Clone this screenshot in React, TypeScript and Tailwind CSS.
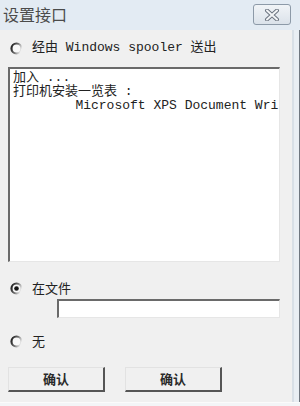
import React from "react";

const mono = { fontFamily: '"Liberation Mono", "Noto Sans CJK SC", monospace' };
const cjk = { fontFamily: '"Noto Sans CJK SC", sans-serif' };

function Radio({ checked = false }: { checked?: boolean }) {
  const id = checked ? "rg-on" : "rg-off";
  return (
    <svg width="13" height="13" viewBox="0 0 13 13" className="shrink-0">
      <defs>
        <linearGradient id={id} x1="0" y1="0.2" x2="1" y2="0.6">
          <stop offset="0" stopColor="#1f1f1f" />
          <stop offset="0.5" stopColor="#6e6e6e" />
          <stop offset="1" stopColor="#f0f0f0" />
        </linearGradient>
      </defs>
      <circle cx="6.5" cy="6.5" r="5" fill="#f8f8f8" stroke={`url(#${id})`} strokeWidth="2.2" />
      {checked && <circle cx="6.5" cy="6.5" r="2.3" fill="#151515" />}
    </svg>
  );
}

function Button({ label }: { label: string }) {
  return (
    <button
      className="flex h-[25px] w-[97px] items-center justify-center border border-t-[#e2e2e2] border-l-[#e2e2e2] border-r-2 border-b-2 border-r-[#555] border-b-[#555] bg-[#f0f0f0] text-[13px] font-bold text-[#2a2a2a]"
      style={cjk}
    >
      {label}
    </button>
  );
}

export default function App() {
  return (
    <div className="flex h-[406px] w-[300px] flex-col overflow-hidden bg-[#f0f0f0]">
      <div className="flex flex-1">
        <div className="flex w-[292px] flex-col">
          {/* title bar */}
          <div className="flex h-[30px] items-start justify-between bg-[#e3ebf3] pl-[3px] pr-[1px] pt-[3px]">
            <span className="text-[16px] leading-[22px] text-[#4b4b4b]" style={cjk}>
              设置接口
            </span>
            <div className="mt-[1px] flex h-[21px] w-[38px] items-center justify-center rounded-[3px] border border-[#8d9aa8] bg-gradient-to-b from-[#f1f4f7] to-[#dbe2ea]">
              <svg width="16" height="12" viewBox="0 0 16 12">
                <path d="M3 1.5 L13 10.5 M13 1.5 L3 10.5" stroke="#6c7480" strokeWidth="4" strokeLinecap="round" />
                <path d="M3 1.5 L13 10.5 M13 1.5 L3 10.5" stroke="#f2f4f6" strokeWidth="2" strokeLinecap="round" />
              </svg>
            </div>
          </div>

          {/* body */}
          <div className="flex flex-1 flex-col px-[8px] pr-[12px]">
            <div className="mt-[10px] flex items-center gap-[9px] pl-[2px]">
              <Radio />
              <span className="text-[13px] leading-[16px] text-[#222]" style={mono}>
                经由 Windows spooler 送出
              </span>
            </div>

            <div
              className="mt-[11px] h-[195px] overflow-hidden whitespace-pre border-t-2 border-l-2 border-r border-b border-t-[#6a6a6a] border-l-[#6a6a6a] border-r-[#e6e6e6] border-b-[#e6e6e6] bg-white pl-[3px] pt-[2px] text-[13px] leading-[14px] text-[#222]"
              style={mono}
            >
              <div>加入 ...</div>
              <div>打印机安装一览表 :</div>
              <div>        Microsoft XPS Document Wri</div>
            </div>

            <div className="mt-[18px] flex items-center gap-[9px] pl-[2px]">
              <Radio checked />
              <span className="text-[13px] leading-[16px] text-[#222]" style={cjk}>
                在文件
              </span>
            </div>
            <div className="ml-[49px] mt-[3px] h-[19px] border-t-2 border-l-2 border-r border-b border-t-[#6a6a6a] border-l-[#6a6a6a] border-r-[#e6e6e6] border-b-[#e6e6e6] bg-white" />

            <div className="mt-[15px] flex items-center gap-[9px] pl-[2px]">
              <Radio />
              <span className="text-[13px] leading-[16px] text-[#222]" style={cjk}>
                无
              </span>
            </div>

            <div className="mt-[18px] flex gap-[20px]">
              <Button label="确认" />
              <Button label="确认" />
            </div>
          </div>
        </div>

        {/* right window frame */}
        <div className="flex w-[8px] flex-col">
          <div className="h-[30px] bg-[#e3ebf3]" />
          <div className="flex flex-1">
            <div className="w-[2px] bg-[#d8dfe6]" />
            <div className="w-[5px] bg-[#e9eef3]" />
            <div className="w-[1px] bg-[#6f7780]" />
          </div>
        </div>
      </div>
      <div className="h-[4px] border-t border-[#fbfbfb] bg-[#f3f5f7]" />
    </div>
  );
}
